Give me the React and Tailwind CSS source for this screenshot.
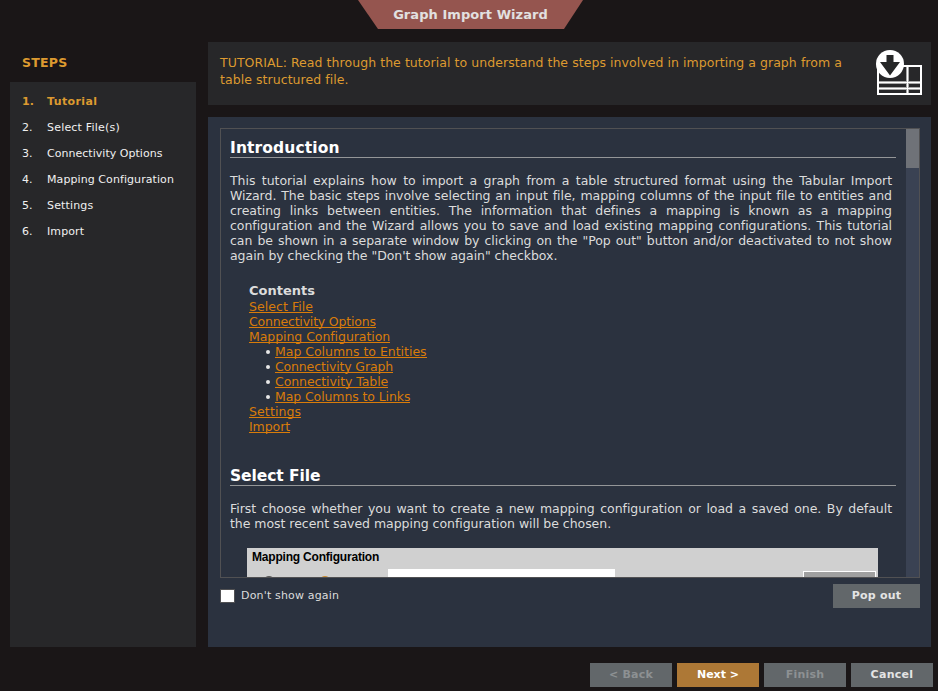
const steps = [
  { label: 'Tutorial', tracking: 'tracking-[0.4px]' },
  { label: 'Select File(s)', tracking: 'tracking-[0.2px]' },
  { label: 'Connectivity Options', tracking: 'tracking-[0.03px]' },
  { label: 'Mapping Configuration', tracking: 'tracking-[0.08px]' },
  { label: 'Settings', tracking: 'tracking-[0.15px]' },
  { label: 'Import', tracking: 'tracking-[0.1px]' },
];

const intro = [
  'This tutorial explains how to import a graph from a table structured format using the Tabular Import',
  'Wizard. The basic steps involve selecting an input file, mapping columns of the input file to entities and',
  'creating links between entities. The information that defines a mapping is known as a mapping',
  'configuration and the Wizard allows you to save and load existing mapping configurations. This tutorial',
  'can be shown in a separate window by clicking on the "Pop out" button and/or deactivated to not show',
  'again by checking the "Don\'t show again" checkbox.',
];

const selectFile = [
  'First choose whether you want to create a new mapping configuration or load a saved one. By default',
  'the most recent saved mapping configuration will be chosen.',
];

function Paragraph({ lines }) {
  return (
    <div className="w-[662px] text-[12.5px] leading-[15px] tracking-[-0.04px] text-[#dcdcdc]">
      {lines.map((line, i) => (
        <p
          key={line}
          className={i < lines.length - 1 ? 'whitespace-nowrap text-justify [text-align-last:justify]' : 'whitespace-nowrap'}
        >
          {line}
        </p>
      ))}
    </div>
  );
}

function Heading({ children, className }) {
  return (
    <h1 className={`h-[22px] w-[666px] border-b border-[#949698] text-[15.5px] leading-[25px] font-bold text-white ${className}`}>
      {children}
    </h1>
  );
}

function ContentsItem({ children, bullet, className }) {
  return (
    <li className={bullet ? 'flex h-[15px] items-start pl-[17px]' : 'flex h-[15px] items-start'}>
      {bullet && <span className="mt-[6px] mr-[5px] size-1 rounded-full bg-[#e8e8e8]" />}
      <a className={`inline-block h-[14px] border-b border-[#d97c0a] text-[12.5px] leading-[15px] whitespace-nowrap text-[#d97c0a] ${className}`}>
        {children}
      </a>
    </li>
  );
}

function ImportIcon() {
  return (
    <svg className="h-[46px] w-[47px]" viewBox="0 0 47 46" fill="none">
      <rect x="2" y="16" width="43" height="28" stroke="#fff" strokeWidth="2" />
      <path d="M31.5 17V43" strokeWidth="3" stroke="#a8a8a8" />
      <path d="M3 32.5H44M3 38.5H44" strokeWidth="3" stroke="#a8a8a8" />
      <path d="M3 32.5H44M3 38.5H44M31.5 17V43" strokeWidth="1" stroke="#fff" />
      <circle cx="14" cy="14" r="14" fill="#fff" />
      <path d="M10.5 5H17.5V12H24L14 25.5L4 12H10.5Z" fill="#252627" />
    </svg>
  );
}

function Button({ children, className }) {
  return (
    <button className={`flex h-6 items-center justify-center pt-px text-[11px] font-bold ${className}`}>{children}</button>
  );
}

export default function App() {
  return (
    <div className="flex h-[691px] w-[938px] flex-col overflow-hidden bg-[#1a1617] font-['DejaVu_Sans',sans-serif]">
      <header className="flex h-[42px] items-start justify-center pl-[3px]">
        <div className="flex h-[29px] w-[225px] items-center justify-center bg-[#95554f] text-[13px] font-bold tracking-[0.06px] text-[#e2e0e0] [clip-path:polygon(0_0,100%_0,206px_100%,20px_100%)]">
          Graph Import Wizard
        </div>
      </header>

      <div className="flex h-[605px] gap-3 pr-[7px] pl-[10px]">
        <aside className="flex w-[186px] flex-col">
          <h2 className="h-10 pl-3 text-[12.5px] leading-[41px] font-bold tracking-[0.25px] text-[#dd9a30]">STEPS</h2>
          <ol className="flex-1 bg-[#272729] pt-[7px] pl-3 text-[11px] text-[#f0f0f0]">
            {steps.map((step, i) => (
              <li key={step.label} className={i === 0 ? 'flex h-[26px] items-center font-bold text-[#dd9a30]' : 'flex h-[26px] items-center'}>
                <span className="w-[25px]">{i + 1}.</span>
                <span className={step.tracking}>{step.label}</span>
              </li>
            ))}
          </ol>
        </aside>

        <main className="flex w-[723px] flex-col gap-3">
          <section className="flex h-[63px] justify-between bg-[#272729] pt-3 pr-2 pl-3">
            <p className="text-[12.5px] leading-[17px] tracking-[0.06px] whitespace-nowrap text-[#dd9a30]">
              TUTORIAL: Read through the tutorial to understand the steps involved in importing a graph from a
              <br />
              table structured file.
            </p>
            <div className="-mt-[4px]">
              <ImportIcon />
            </div>
          </section>

          <section className="h-[530px] bg-[#2b323f] px-3 pt-[11px] pr-[11px]">
            <div className="flex h-[450px] w-[700px] overflow-hidden border border-[#515153]">
              <div className="w-[685px] overflow-hidden pt-[7px] pl-[9px]">
                <Heading className="tracking-[0.12px]">Introduction</Heading>
                <div className="mt-[15px]">
                  <Paragraph lines={intro} />
                </div>
                <div className="mt-[19px] pl-[19px]">
                  <h3 className="h-[17px] text-[13px] leading-[17px] font-bold text-[#dcdcdc]">Contents</h3>
                  <ul>
                    <ContentsItem className="tracking-[0.05px]">Select File</ContentsItem>
                    <ContentsItem className="tracking-[-0.19px]">Connectivity Options</ContentsItem>
                    <ContentsItem className="tracking-[-0.06px]">Mapping Configuration</ContentsItem>
                    <ContentsItem bullet className="tracking-[-0.02px]">Map Columns to Entities</ContentsItem>
                    <ContentsItem bullet className="tracking-[-0.15px]">Connectivity Graph</ContentsItem>
                    <ContentsItem bullet className="tracking-[-0.08px]">Connectivity Table</ContentsItem>
                    <ContentsItem bullet className="tracking-[-0.1px]">Map Columns to Links</ContentsItem>
                    <ContentsItem className="tracking-[0.12px]">Settings</ContentsItem>
                    <ContentsItem className="tracking-[-0.07px]">Import</ContentsItem>
                  </ul>
                </div>
                <Heading className="mt-[30px] tracking-[-0.08px]">Select File</Heading>
                <div className="mt-[15px]">
                  <Paragraph lines={selectFile} />
                </div>
                <div className="mt-[17px] ml-[17px] flex h-10 w-[631px] flex-col bg-[#d0d0d0]">
                  <div className="h-[21px] shrink-0 pl-[5px] font-['Liberation_Sans',sans-serif] text-[12px] leading-[18px] font-bold tracking-[-0.2px] text-black">
                    Mapping Configuration
                  </div>
                  <div className="flex">
                    <span className="mt-[7px] ml-[16px] size-3 rounded-full border-2 border-[#555]" />
                    <span className="mt-[7px] ml-[44px] size-3 rounded-full border-2 border-[#c98a2c]" />
                    <span className="ml-[57px] h-5 w-[227px] bg-white" />
                    <span className="mt-[2px] ml-[188px] h-5 w-[73px] border border-white bg-[#a0a0a0]" />
                  </div>
                </div>
              </div>
              <div className="w-[13px] bg-[#3a4253]">
                <div className="h-[39px] bg-[#6f7278]" />
              </div>
            </div>
            <div className="flex items-start justify-between pt-[6px]">
              <label className="flex h-6 items-center gap-[6px] text-[11px] tracking-[0.17px] text-[#dcdcdc]">
                <span className="h-[14px] w-[15px] border border-[#515153] bg-white" />
                <span className="pt-px">Don't show again</span>
              </label>
              <Button className="w-[87px] bg-[#62676a] tracking-[0.2px] text-[#e4e4e4]">Pop out</Button>
            </div>
          </section>
        </main>
      </div>

      <footer className="flex justify-end gap-[5px] pt-4 pr-[5px]">
        <Button className="w-[82px] bg-[#62676a] tracking-[0.2px] text-[#8d9193]">&lt; Back</Button>
        <Button className="w-[82px] bg-[#ad7836] text-white">Next &gt;</Button>
        <Button className="w-[82px] bg-[#62676a] tracking-[0.2px] text-[#8d9193]">Finish</Button>
        <Button className="w-[82px] bg-[#62676a] tracking-[0.3px] text-[#e4e4e4]">Cancel</Button>
      </footer>
    </div>
  );
}
